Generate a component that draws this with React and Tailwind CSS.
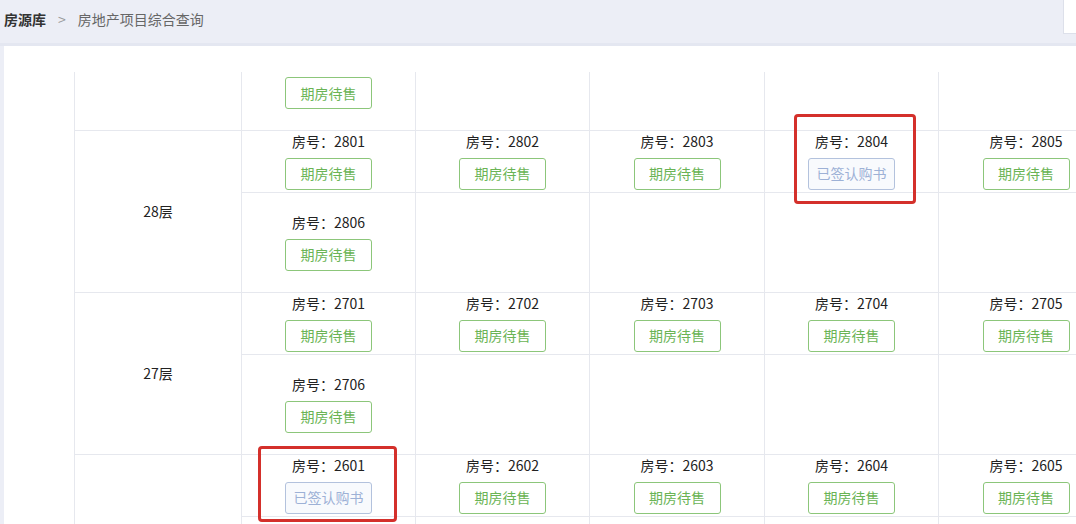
import React from 'react';

const font = { fontFamily: '"Noto Sans CJK SC", "Noto Sans", sans-serif' };

const floors = [
  {
    name: '28层',
    rows: [
      [
        { no: '2801' },
        { no: '2802' },
        { no: '2803' },
        { no: '2804', signed: true },
        { no: '2805' },
      ],
      [{ no: '2806' }, null, null, null, null],
    ],
  },
  {
    name: '27层',
    rows: [
      [{ no: '2701' }, { no: '2702' }, { no: '2703' }, { no: '2704' }, { no: '2705' }],
      [{ no: '2706' }, null, null, null, null],
    ],
  },
  {
    name: '',
    rows: [
      [
        { no: '2601', signed: true },
        { no: '2602' },
        { no: '2603' },
        { no: '2604' },
        { no: '2605' },
      ],
      [null, null, null, null, null],
    ],
  },
];

function StatusButton({ signed }) {
  if (signed) {
    return (
      <button className="h-[32px] w-[87px] rounded-[3px] border border-[#b3c2dd] bg-[#f8fafd] text-[14px] text-[#9db1d6]">
        已签认购书
      </button>
    );
  }
  return (
    <button className="h-[32px] w-[87px] rounded-[3px] border border-[#8cc67a] bg-white text-[14px] text-[#6ab455]">
      期房待售
    </button>
  );
}

function RoomCell({ room }) {
  return (
    <td className="border border-[#e6e8ee] p-0 align-middle">
      {room && (
        <div className="flex flex-col items-center">
          <div className="text-[14px] leading-[16px] text-[#222]">房号：{room.no}</div>
          <div className="mt-[9px]">
            <StatusButton signed={room.signed} />
          </div>
        </div>
      )}
    </td>
  );
}

export default function App() {
  return (
    <div className="relative flex h-[524px] w-[1076px] flex-col overflow-hidden bg-[#eceef6]" style={font}>
      {/* Breadcrumb */}
      <div className="flex h-[46px] shrink-0 justify-between border-b-[3px] border-[#e4e7f1]">
        <div className="flex items-center pb-[4px] pl-[4px] text-[14px]">
          <span className="font-bold text-[#333]">房源库</span>
          <span className="mx-[12px] text-[#999]">&gt;</span>
          <span className="text-[#666]">房地产项目综合查询</span>
        </div>
        <div className="h-[34px] w-[13px] border-b border-l border-[#dde0ea] bg-white" />
      </div>

      {/* Panel */}
      <div className="ml-[4px] flex-1 overflow-hidden bg-white pl-[70px] pt-[26px]">
        <table className="w-[1039px] min-w-[1039px] table-fixed border-collapse">
          <colgroup>
            <col className="w-[167px]" />
            <col className="w-[174px]" />
            <col className="w-[174px]" />
            <col className="w-[175px]" />
            <col className="w-[174px]" />
            <col className="w-[175px]" />
          </colgroup>
          <tbody>
            <tr className="h-[58px]">
              <td className="border border-t-0 border-[#e6e8ee] p-0" />
              <td className="border border-t-0 border-[#e6e8ee] p-0 align-top">
                <div className="flex justify-center pt-[5px]">
                  <StatusButton />
                </div>
              </td>
              <td className="border border-t-0 border-[#e6e8ee] p-0" />
              <td className="border border-t-0 border-[#e6e8ee] p-0" />
              <td className="border border-t-0 border-[#e6e8ee] p-0" />
              <td className="border border-t-0 border-[#e6e8ee] p-0" />
            </tr>
            {floors.map((floor, fi) =>
              floor.rows.map((row, ri) => (
                <tr key={`${fi}-${ri}`} className={ri === 0 ? 'h-[62px]' : 'h-[100px]'}>
                  {ri === 0 && (
                    <td rowSpan={2} className="border border-[#e6e8ee] p-0 text-center text-[14px] text-[#222]">
                      {floor.name}
                    </td>
                  )}
                  {row.map((room, ci) => (
                    <RoomCell key={ci} room={room} />
                  ))}
                </tr>
              ))
            )}
          </tbody>
        </table>
      </div>

      {/* Red annotation boxes */}
      <div className="absolute left-[794px] top-[114px] h-[90px] w-[122px] rounded-[4px] border-[3px] border-[#d4302b]" />
      <div className="absolute left-[258px] top-[446px] h-[76px] w-[139px] rounded-[4px] border-[3px] border-[#d4302b]" />
    </div>
  );
}
